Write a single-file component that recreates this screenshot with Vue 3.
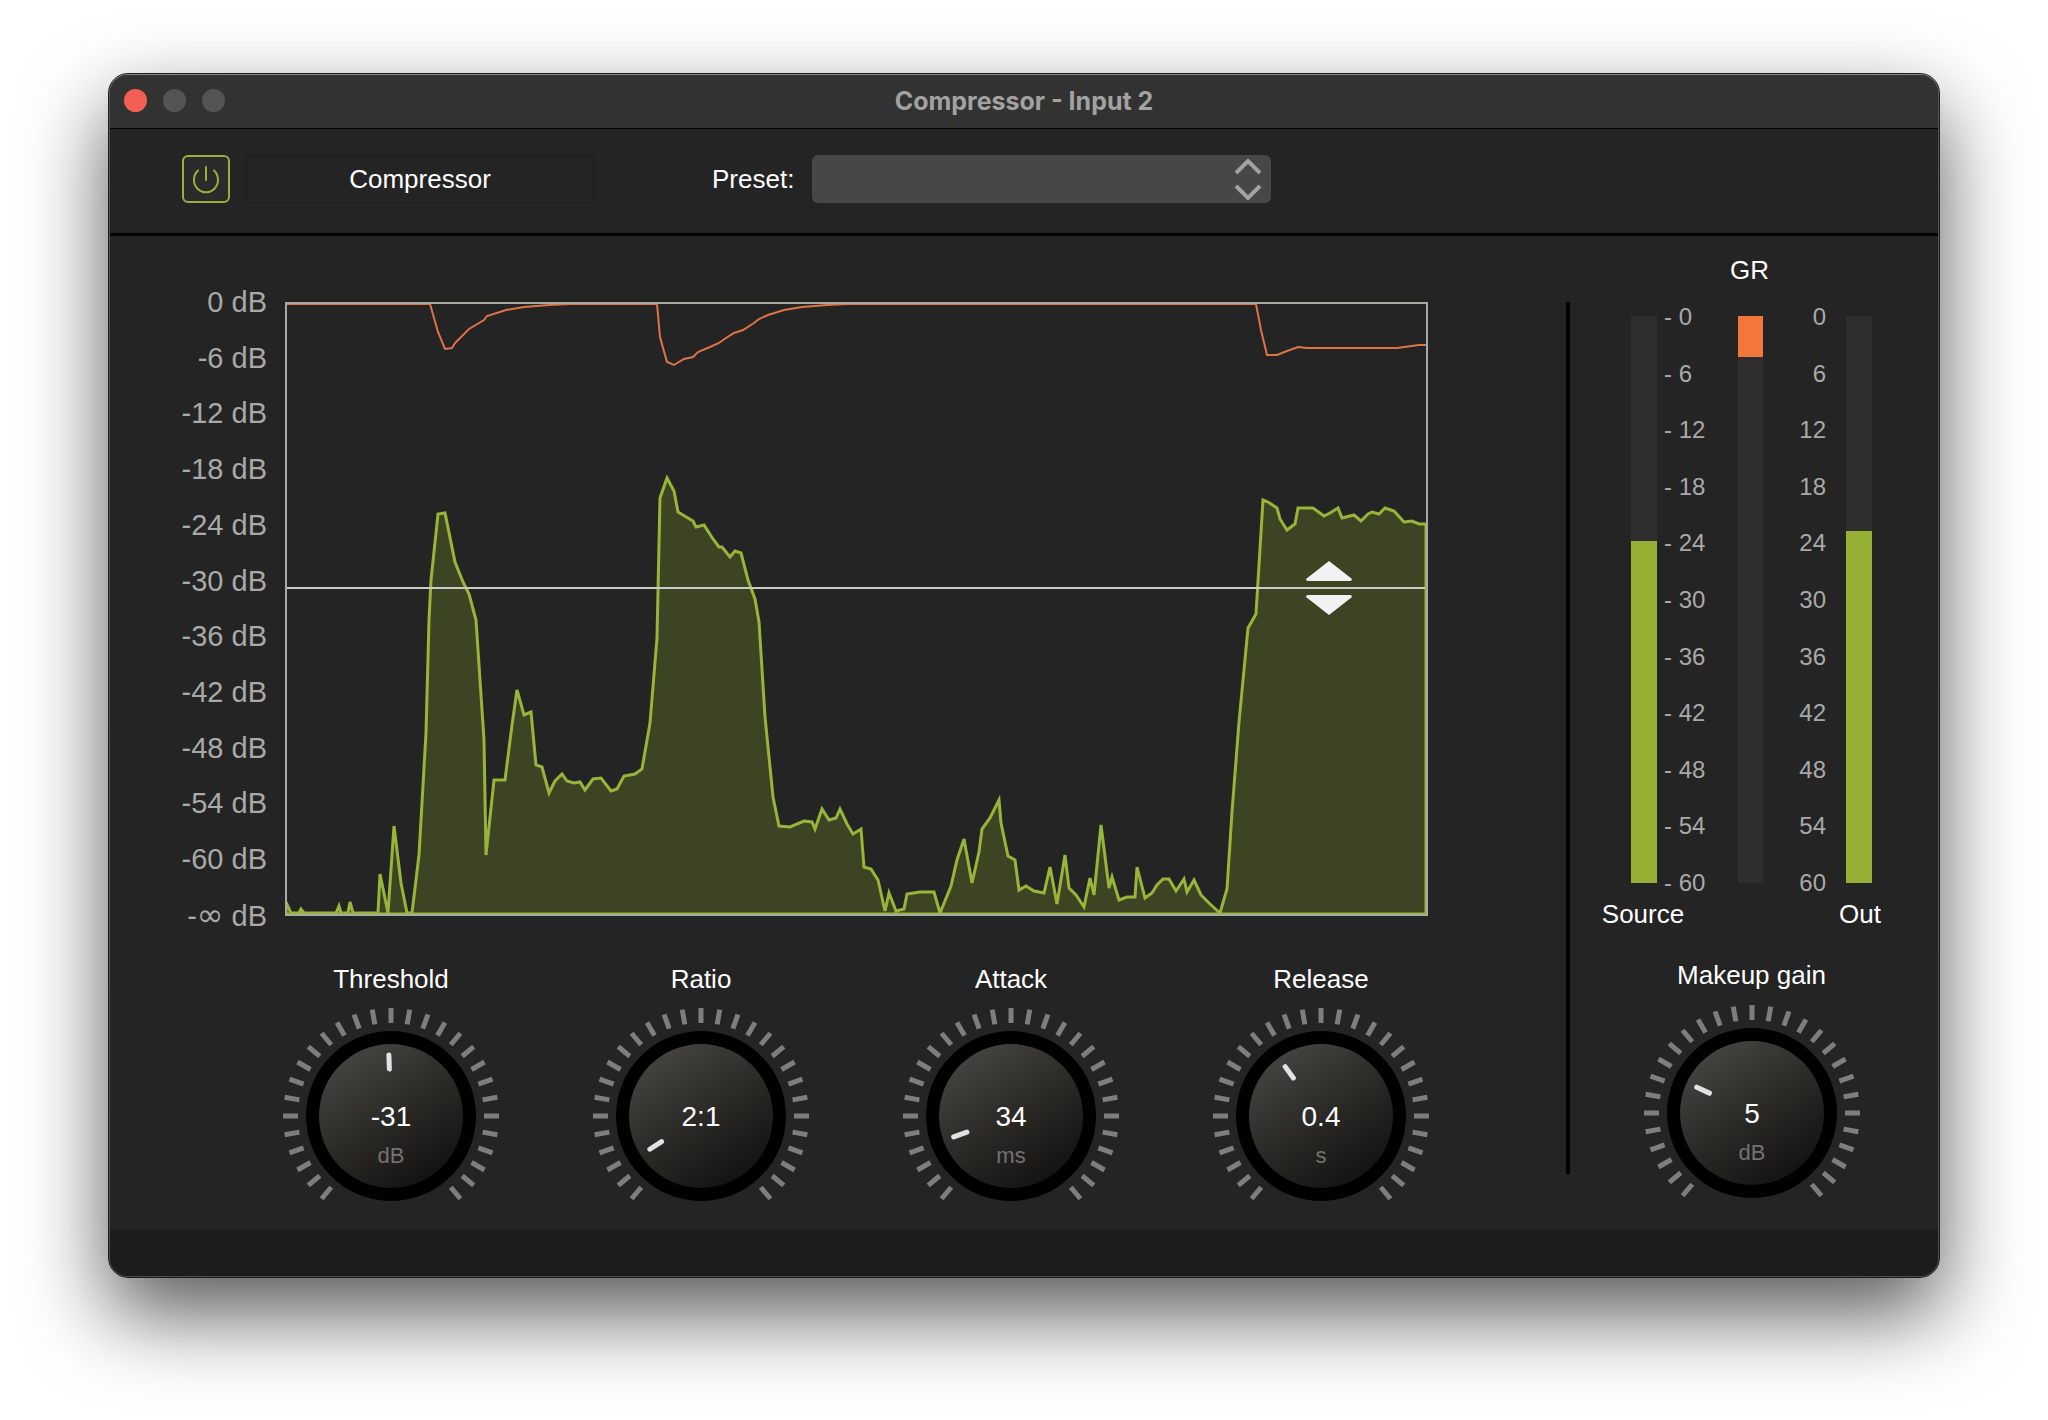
<script setup>
import { ref, reactive } from 'vue'

const axisLabels = ['0', '-6', '-12', '-18', '-24', '-30', '-36', '-42', '-48', '-54', '-60']
const meterMarks = [0, 6, 12, 18, 24, 30, 36, 42, 48, 54, 60]

const enabled = ref(true)
const preset = ref('')

const levels = { source: 60.4, reduction: 7.2, out: 62.1 }

const knobs = reactive([
  { id: 'threshold', name: 'Threshold', display: '-31', unit: 'dB', value: -31, min: -60, max: 0, step: 1, angle: -2 },
  { id: 'ratio', name: 'Ratio', display: '2:1', unit: '', value: 2, min: 1, max: 20, step: 1, angle: -123 },
  { id: 'attack', name: 'Attack', display: '34', unit: 'ms', value: 34, min: 0, max: 300, step: 1, angle: -110 },
  { id: 'release', name: 'Release', display: '0.4', unit: 's', value: 0.4, min: 0, max: 1, step: 0.1, angle: -36 },
])
const makeup = { id: 'makeup', name: 'Makeup gain', display: '5', unit: 'dB', value: 5, min: 0, max: 20, step: 1, angle: -65 }

// Tick marks every 10 degrees from -140 to 140.
const ticks = Array.from({ length: 29 }, (_, i) => -140 + i * 10)

const levelCurve =
  '1,600 6,611 14,611 16,607 19,611 51,611 54,604 56,611 63,611 65,600 68,611 93,611 95,572 103,611 109,524 116,581 122,611 127,611 ' +
  '134,553 141,431 144,318 146,278 153,212 160,211 170,260 178,280 184,292 191,318 199,438 201,553 209,478 220,478 227,423 232,388 ' +
  '239,413 246,410 251,463 257,465 264,491 270,479 277,472 282,479 289,481 295,480 300,488 308,477 316,476 326,489 332,487 339,474 ' +
  '350,472 357,467 365,421 372,336 375,196 382,176 389,189 393,210 408,219 411,225 419,223 428,237 434,245 437,245 445,255 450,249 ' +
  '456,251 463,278 470,297 474,320 480,415 488,495 494,524 505,525 519,519 527,520 530,527 537,507 544,518 551,516 555,507 562,522 ' +
  '568,532 576,527 579,565 586,567 593,578 600,609 604,591 611,609 619,607 622,592 635,590 649,590 655,611 666,584 672,558 679,537 ' +
  '687,581 694,550 697,527 705,516 714,498 716,521 723,554 730,558 734,588 741,584 749,589 759,591 765,565 772,602 780,553 784,586 ' +
  '791,593 799,605 805,576 809,593 816,523 824,586 827,575 834,598 842,595 850,595 852,565 860,596 867,591 872,583 878,577 884,577 ' +
  '891,589 899,577 902,590 909,578 916,593 925,602 935,611 942,587 947,510 954,420 963,326 971,312 978,198 983,200 992,206 995,217 ' +
  '1002,228 1010,222 1013,206 1021,206 1028,206 1039,214 1045,211 1053,206 1057,216 1069,213 1076,219 1083,212 1087,210 1094,212 ' +
  '1100,206 1109,209 1119,220 1127,219 1134,222 1141,222'

const reductionCurve =
  '1,2 145,2 153,30 160,47 167,46 170,41 184,27 199,18 202,14 221,8 239,5 264,3 286,2 372,2 375,35 382,60 389,63 399,57 408,55 ' +
  '413,50 425,45 434,41 438,38 449,31 458,28 469,21 474,17 483,13 499,8 517,5 542,3 563,2 971,2 976,28 982,53 992,53 1002,49 1013,45 ' +
  '1022,46 1082,46 1112,46 1134,43 1141,43'
</script>

<template>
  <main class="desktop">
    <section class="window">
      <div class="frame">
        <header class="titlebar">
          <div class="lights">
            <button class="light close" aria-label="Close"></button>
            <button class="light" aria-label="Minimize"></button>
            <button class="light" aria-label="Zoom"></button>
          </div>
          <h1 class="title">Compressor - Input 2</h1>
        </header>

        <div class="toolbar">
          <button class="power" aria-label="Power" :aria-pressed="enabled" @click="enabled = !enabled">
            <svg viewBox="0 0 44 44" width="44" height="44">
              <path d="M14 13.500A12 12.500 0 1 0 30 13.500" />
              <path d="M22 10V23" />
            </svg>
          </button>
          <div class="plugin-name">Compressor</div>
          <label class="preset-label" for="preset">Preset:</label>
          <div class="preset">
            <select id="preset" v-model="preset">
              <option value=""></option>
            </select>
            <svg class="chevrons" viewBox="0 0 28 44" width="28" height="44">
              <path d="M2 16L14 4L26 16M2 29L14 41L26 29" />
            </svg>
          </div>
        </div>

        <div class="body">
          <div class="main-panel">
            <div class="graph">
              <ol class="axis">
                <li v-for="label in axisLabels" :key="label">{{ label }} dB</li>
                <li>-<span class="infinity">∞</span> dB</li>
              </ol>
              <div class="plot">
                <svg class="curves" viewBox="0 0 1143 614" preserveAspectRatio="none">
                  <polygon class="level-fill" :points="`1,612 ${levelCurve} 1141,612`" />
                  <polyline class="reduction-line" :points="reductionCurve" />
                  <rect class="plot-border" x="1" y="1" width="1141" height="612" />
                  <path class="threshold-line" d="M2 286H1140" />
                </svg>
                <svg class="handle" viewBox="0 0 46 54" width="46" height="54">
                  <path d="M23 0L46 18Q46 20 44 20H2Q0 20 0 18ZM23 54L46 36Q46 34 44 34H2Q0 34 0 36Z" />
                </svg>
              </div>
            </div>

            <div class="knobs">
              <label v-for="k in knobs" :key="k.id" class="knob">
                <span class="knob-name">{{ k.name }}</span>
                <span class="dial">
                  <svg viewBox="-109 -109 218 218" width="218" height="218">
                    <defs>
                      <linearGradient :id="`face-${k.id}`" x1="0.2" y1="0.05" x2="0.8" y2="0.95">
                        <stop offset="0" stop-color="#454441" />
                        <stop offset="0.5" stop-color="#2b2a27" />
                        <stop offset="1" stop-color="#131210" />
                      </linearGradient>
                    </defs>
                    <path v-for="t in ticks" :key="t" class="tick" d="M0 -108V-93" :transform="`rotate(${t})`" />
                    <circle r="85" fill="#000" />
                    <circle r="72" :fill="`url(#face-${k.id})`" />
                    <path class="pointer" d="M0 -61V-47" :transform="`rotate(${k.angle})`" />
                    <text class="value" y="10">{{ k.display }}</text>
                    <text v-if="k.unit" class="unit" y="47">{{ k.unit }}</text>
                  </svg>
                  <input type="range" :min="k.min" :max="k.max" :step="k.step" :value="k.value" />
                </span>
              </label>
            </div>
          </div>

          <div class="divider"></div>

          <aside class="meter-panel">
            <div class="meter-title">GR</div>
            <div class="meters">
              <div class="meter"><div class="fill" :style="{ height: levels.source + '%' }"></div></div>
              <ol class="scale source-scale">
                <li v-for="m in meterMarks" :key="m">- {{ m }}</li>
              </ol>
              <div class="meter reduction"><div class="fill" :style="{ height: levels.reduction + '%' }"></div></div>
              <ol class="scale out-scale">
                <li v-for="m in meterMarks" :key="m">{{ m }}</li>
              </ol>
              <div class="meter"><div class="fill" :style="{ height: levels.out + '%' }"></div></div>
            </div>
            <div class="captions">
              <span>Source</span>
              <span>Out</span>
            </div>
            <label class="knob makeup">
              <span class="knob-name">{{ makeup.name }}</span>
              <span class="dial">
                <svg viewBox="-109 -109 218 218" width="218" height="218">
                  <defs>
                    <linearGradient id="face-makeup" x1="0.2" y1="0.05" x2="0.8" y2="0.95">
                      <stop offset="0" stop-color="#454441" />
                      <stop offset="0.5" stop-color="#2b2a27" />
                      <stop offset="1" stop-color="#131210" />
                    </linearGradient>
                  </defs>
                  <path v-for="t in ticks" :key="t" class="tick" d="M0 -108V-93" :transform="`rotate(${t})`" />
                  <circle r="85" fill="#000" />
                  <circle r="72" fill="url(#face-makeup)" />
                  <path class="pointer" d="M0 -61V-47" :transform="`rotate(${makeup.angle})`" />
                  <text class="value" y="10">{{ makeup.display }}</text>
                  <text class="unit" y="47">{{ makeup.unit }}</text>
                </svg>
                <input type="range" :min="makeup.min" :max="makeup.max" :step="makeup.step" :value="makeup.value" />
              </span>
            </label>
          </aside>
        </div>

        <footer class="footer"></footer>
      </div>
    </section>
  </main>
</template>

<style>
html,
body {
  background: #fff;
}
</style>

<style scoped>
.desktop {
  box-sizing: border-box;
  min-height: 100vh;
  padding: 73px 108px;
  font-family: "Liberation Sans", Arial, sans-serif;
  font-size: 26px;
  line-height: 30px;
  color: #fff;
}

.window {
  border: 1px solid #1c1c1c;
  border-radius: 20px;
  padding: 1px;
  background: linear-gradient(#8a8a8a, #555 24px, #4c4c4c);
  box-shadow: 0 36px 84px rgba(0, 0, 0, 0.66);
}

.frame {
  border-radius: 18px;
  overflow: hidden;
  background: #242424;
}

.titlebar {
  display: grid;
  grid-template-columns: 1fr auto 1fr;
  align-items: center;
  height: 51px;
  padding: 0 14px 2px;
  background: #323232;
  border-bottom: 1px solid #000;
}

.lights {
  display: flex;
  gap: 16px;
}

.light {
  width: 23px;
  height: 23px;
  padding: 0;
  border: 0;
  border-radius: 50%;
  background: #545454;
}

.light.close {
  background: #f35f53;
}

.title {
  margin: 0;
  font-family: Inter, "Liberation Sans", sans-serif;
  font-size: 25px;
  font-weight: 700;
  color: #a2a2a2;
}

.toolbar {
  display: flex;
  align-items: center;
  padding: 26px 72px 30px;
  border-bottom: 3px solid #000;
}

.power {
  width: 48px;
  height: 48px;
  padding: 0;
  border: 2px solid #98b03d;
  border-radius: 6px;
  background: #2c2a2a;
}

.power svg {
  display: block;
  fill: none;
  stroke: #98b03d;
  stroke-width: 2;
  stroke-linecap: round;
}

.plugin-name {
  flex: 0 1 346px;
  margin-left: 16px;
  border: 1px solid #1c1c1c;
  line-height: 46px;
  text-align: center;
}

.preset-label {
  margin: 0 18px 0 118px;
}

.preset {
  position: relative;
  flex: 0 1 459px;
}

.preset select {
  display: block;
  width: 100%;
  height: 48px;
  padding: 0 48px 0 12px;
  appearance: none;
  border: 0;
  border-radius: 6px;
  background: #474747;
  color: #fff;
  font: inherit;
}

.chevrons {
  position: absolute;
  top: 2px;
  right: 9px;
  fill: none;
  stroke: #a2a2a2;
  stroke-width: 4;
  pointer-events: none;
}

.body {
  display: flex;
}

.main-panel {
  flex: 1;
  min-width: 0;
  padding-top: 50px;
}

.graph {
  display: flex;
  gap: 18px;
  padding: 0 138px 0 57px;
}

.axis,
.scale {
  display: flex;
  flex-direction: column;
  justify-content: space-between;
  margin: 0;
  padding: 0;
  list-style: none;
  color: #a9a9a9;
}

.axis {
  width: 100px;
  font-size: 29px;
  line-height: 32px;
  text-align: right;
  white-space: nowrap;
}

.axis li {
  height: 32px;
}

.infinity {
  font-family: "DejaVu Sans", sans-serif;
  font-size: 32px;
}

.plot {
  position: relative;
  flex: 1;
  margin: 16px 0 15px;
}

.curves {
  display: block;
  width: 100%;
  height: 614px;
}

.curves * {
  vector-effect: non-scaling-stroke;
}

.level-fill {
  fill: #3d4423;
  stroke: #98b53a;
  stroke-width: 3;
}

.reduction-line {
  fill: none;
  stroke: #dd7447;
  stroke-width: 2;
}

.plot-border {
  fill: none;
  stroke: #a9a9a4;
  stroke-width: 2;
}

.threshold-line {
  stroke: #c9ccc6;
  stroke-width: 2;
}

.handle {
  position: absolute;
  top: 259px;
  right: 76px;
  fill: #f2f2f2;
}

.knobs {
  display: grid;
  grid-template-columns: repeat(4, 1fr);
  padding: 33px 90px 5px 126px;
}

.knob {
  display: flex;
  flex-direction: column;
  align-items: center;
}

.knob-name {
  margin-bottom: 13px;
}

.dial {
  position: relative;
}

.dial svg {
  display: block;
}

.dial input {
  position: absolute;
  inset: 0;
  width: 100%;
  height: 100%;
  margin: 0;
  opacity: 0;
}

.tick {
  stroke: #7e7e7e;
  stroke-width: 5;
}

.pointer {
  stroke: #e2e2e0;
  stroke-width: 5;
  stroke-linecap: round;
}

.value,
.unit {
  text-anchor: middle;
}

.value {
  fill: #fff;
  font-size: 28px;
}

.unit {
  fill: #737271;
  font-size: 22px;
}

.divider {
  flex: none;
  width: 4px;
  margin: 66px 0 56px;
  background: #000;
}

.meter-panel {
  flex: none;
  width: 363px;
  padding: 19px 5px 0 0;
  text-align: center;
}

.meter-title {
  padding-right: 4px;
}

.meters {
  display: flex;
  justify-content: center;
  height: 590px;
  margin-top: 20px;
}

.meter {
  display: flex;
  align-items: flex-end;
  width: 26px;
  margin: 11px 0 12px;
  background: #302d2e;
}

.fill {
  width: 100%;
  background: #95b035;
}

.meter.reduction {
  width: 25px;
  align-items: flex-start;
}

.meter.reduction .fill {
  background: #f1773c;
}

.scale {
  font-size: 24px;
  line-height: 24px;
}

.source-scale {
  width: 74px;
  padding-left: 7px;
  text-align: left;
}

.out-scale {
  width: 63px;
  padding-right: 20px;
  text-align: right;
}

.captions {
  display: flex;
  justify-content: space-between;
  width: 337px;
  margin: 4px auto 31px;
}

.captions span {
  width: 120px;
}

.makeup .knob-name {
  margin-bottom: 14px;
}

.footer {
  height: 46px;
  background: #1e1b1c;
}
</style>
